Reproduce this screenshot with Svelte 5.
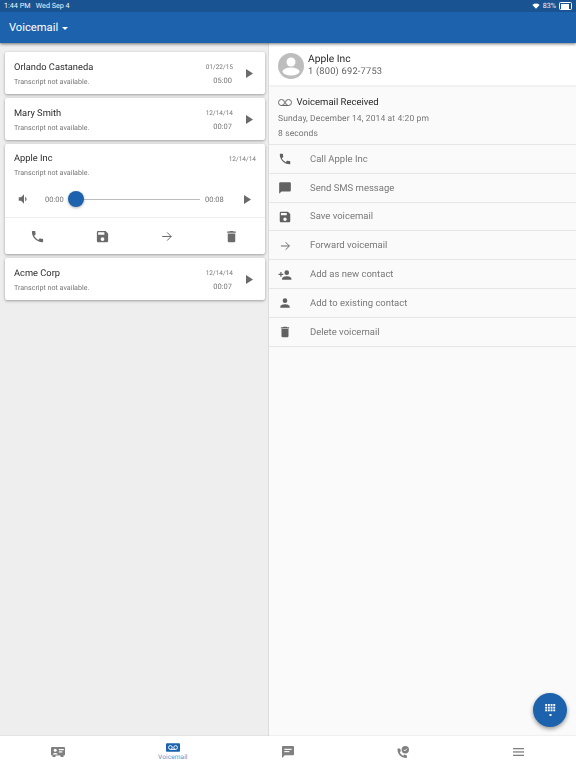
<script>
  const P = {
    phone: "M6.6 10.8c1.4 2.8 3.8 5.1 6.6 6.6l2.2-2.2c.3-.3.7-.4 1-.2 1.1.4 2.3.6 3.6.6.6 0 1 .4 1 1V20c0 .6-.4 1-1 1C10.6 21 3 13.4 3 4c0-.6.4-1 1-1h3.5c.6 0 1 .4 1 1 0 1.3.2 2.5.6 3.6.1.3 0 .7-.2 1z",
    save: "M17 3H5a2 2 0 0 0-2 2v14a2 2 0 0 0 2 2h14a2 2 0 0 0 2-2V7zm-5 16a3 3 0 1 1 0-6 3 3 0 0 1 0 6zm3-10H5V5h10z",
    del: "M6 19a2 2 0 0 0 2 2h8a2 2 0 0 0 2-2V7H6zM19 4h-3.500l-1-1h-5l-1 1H5v2h14z",
    sms: "M20 2H4a2 2 0 0 0-2 2v18l4-4h14a2 2 0 0 0 2-2V4a2 2 0 0 0-2-2z",
    addp: "M15 12a4 4 0 1 0 0-8 4 4 0 0 0 0 8zm-9-2V7H4v3H1v2h3v3h2v-3h3v-2zm9 4c-2.700 0-8 1.300-8 4v2h16v-2c0-2.700-5.300-4-8-4z",
    person: "M12 12a4 4 0 1 0 0-8 4 4 0 0 0 0 8zm0 2c-2.700 0-8 1.300-8 4v2h16v-2c0-2.700-5.300-4-8-4z",
    vol: "M3 9v6h4l5 5V4L7 9zm13.500 3A4.500 4.500 0 0 0 14 8v8a4.500 4.500 0 0 0 2.500-4z"
  };
  const actions = [
    ["phone", "Call Apple Inc"],
    ["sms", "Send SMS message"],
    ["save", "Save voicemail"],
    ["fwd", "Forward voicemail"],
    ["addp", "Add as new contact"],
    ["person", "Add to existing contact"],
    ["del", "Delete voicemail"]
  ];
  const keys = [];
  for (let r = 0; r < 3; r++) for (let c = 0; c < 4; c++) keys.push([c, r]);
</script>

{#snippet icon(name, size)}
  <svg class="ic" width={size} height={size} viewBox="0 0 24 24" aria-hidden="true">
    {#if name === "fwd"}
      <path d="M5 12h14.500M13 5.500l6.500 6.500-6.500 6.500" fill="none" stroke="currentColor" stroke-width="1.600"/>
    {:else}
      <path d={P[name]} fill="currentColor"/>
    {/if}
  </svg>
{/snippet}

{#snippet play()}
  <svg class="play" width="7" height="9" viewBox="0 0 7 9" aria-hidden="true"><path d="M0 0 7 4.500 0 9z" fill="currentColor"/></svg>
{/snippet}

{#snippet card(name, date, time)}
  <article class="card row">
    <div class="grow">
      <div class="name">{name}</div>
      <div class="sub">Transcript not available.</div>
    </div>
    <div class="meta">
      <div class="date">{date}</div>
      <div class="time">{time}</div>
    </div>
    {@render play()}
  </article>
{/snippet}

<div class="page">
  <header class="bar">
    <div class="status">
      <span>1:44 PM&nbsp;&nbsp; Wed Sep 4</span>
      <span class="status-r">
        <svg width="8" height="6" viewBox="0 0 13 10" aria-hidden="true"><path d="M6.500 9.500 0.500 3.200a8.600 8.600 0 0 1 12 0z" fill="#fff"/></svg>
        <span>83%</span>
        <span class="batt"><span class="level"></span></span>
      </span>
    </div>
    <div class="title">Voicemail <span class="caret"></span></div>
  </header>

  <main class="main">
    <section class="list">
      {@render card("Orlando Castaneda", "01/22/15", "05:00")}
      {@render card("Mary Smith", "12/14/14", "00:07")}
      <article class="card open">
        <div class="open-top">
          <div class="head">
            <div class="name">Apple Inc</div>
            <div class="date">12/14/14</div>
          </div>
          <div class="sub sub2">Transcript not available.</div>
          <div class="player">
            <span class="vol">{@render icon("vol", 14)}</span>
            <span class="t1">00:00</span>
            <div class="track"><span class="knob"></span></div>
            <span class="t2">00:08</span>
            {@render play()}
          </div>
        </div>
        <div class="tools">
          <span>{@render icon("phone", 15)}</span>
          <span>{@render icon("save", 15)}</span>
          <span>{@render icon("fwd", 15)}</span>
          <span>{@render icon("del", 15)}</span>
        </div>
      </article>
      {@render card("Acme Corp", "12/14/14", "00:07")}
    </section>

    <section class="detail">
      <div class="contact">
        <svg width="26" height="26" viewBox="0 0 26 26" aria-hidden="true">
          <circle cx="13" cy="13" r="13" fill="#bdbdbd"/>
          <circle cx="13" cy="9" r="4.500" fill="#fff"/>
          <ellipse cx="13" cy="18.500" rx="8.500" ry="4" fill="#fff"/>
        </svg>
        <div>
          <div class="c-name">Apple Inc</div>
          <div class="c-num">1 (800) 692-7753</div>
        </div>
      </div>
      <div class="info">
        <div class="info-h">
          <svg width="14" height="8" viewBox="0 0 14 8" aria-hidden="true"><g fill="none" stroke="#666" stroke-width="1"><circle cx="3.500" cy="3.500" r="3"/><circle cx="10.500" cy="3.500" r="3"/><path d="M3.500 6.500h7"/></g></svg>
          <span>Voicemail Received</span>
        </div>
        <div class="info-l">Sunday, December 14, 2014 at 4:20 pm</div>
        <div class="info-l last">8 seconds</div>
      </div>
      {#each actions as [ic, label]}
        <div class="action">
          <span class="a-ic">{@render icon(ic, 14)}</span>
          <span class="a-label">{label}</span>
        </div>
      {/each}
      <button class="fab" aria-label="Dial pad">
        <svg width="11" height="12" viewBox="0 0 11 12" aria-hidden="true">
          {#each keys as [c, r]}
            <rect x={c * 2.7 + 0.2} y={r * 2.7} width="1.900" height="1.900" fill="#fff"/>
          {/each}
          <rect x="4.500" y="10" width="2" height="2" fill="#fff"/>
        </svg>
      </button>
    </section>
  </main>

  <nav class="tabs">
    <div class="tab">
      <svg width="14" height="10" viewBox="0 0 14 10" aria-hidden="true"><rect width="14" height="8.500" rx="1" fill="#808080"/><rect x="1.500" y="8" width="3" height="2" fill="#808080"/><rect x="9.500" y="8" width="3" height="2" fill="#808080"/><circle cx="4.200" cy="3.200" r="1.500" fill="#fff"/><path d="M1.800 7.500c0-2 4.800-2 4.800 0z" fill="#fff"/><rect x="7.800" y="2" width="5" height="1.200" fill="#fff"/><rect x="7.800" y="4.300" width="3.500" height="1.200" fill="#fff"/></svg>
    </div>
    <div class="tab active">
      <svg width="14" height="9" viewBox="0 0 15 9" aria-hidden="true"><rect width="15" height="9" rx="1" fill="#1c62ad"/><g fill="none" stroke="#fff" stroke-width="1"><circle cx="4.700" cy="4.500" r="2"/><circle cx="10.300" cy="4.500" r="2"/><path d="M4.700 6.500h5.600"/></g></svg>
      <span>Voicemail</span>
    </div>
    <div class="tab">
      <svg width="12" height="12" viewBox="0 0 13 13" aria-hidden="true"><path d="M1 0h11a1 1 0 0 1 1 1v8a1 1 0 0 1-1 1H3l-3 3V1a1 1 0 0 1 1-1z" fill="#808080"/><rect x="2.500" y="3" width="8" height="1.200" fill="#fff"/><rect x="2.500" y="5.500" width="5.500" height="1.200" fill="#fff"/></svg>
    </div>
    <div class="tab">
      <svg width="12" height="13" viewBox="0 0 13 14" aria-hidden="true"><path d="M0.500 3.500c0 5.500 4 9.500 9.500 9.500.4 0 .7-.3.700-.7V10.200l-2.700-1-1.300 1.300C4.900 9.500 3.700 8.300 3 6.600L4.300 5.300l-1-2.700H1.200c-.4 0-.7.400-.7.900z" fill="#808080"/><circle cx="9" cy="4" r="4" fill="#808080"/><path d="M7.200 4l1.300 1.300 2.200-2.400" stroke="#fff" fill="none"/></svg>
    </div>
    <div class="tab">
      <svg width="11" height="8" viewBox="0 0 11 8" aria-hidden="true"><rect width="11" height="1.300" fill="#808080"/><rect y="3.300" width="11" height="1.300" fill="#808080"/><rect y="6.700" width="11" height="1.300" fill="#808080"/></svg>
    </div>
  </nav>
</div>

<style>
  :global(body) { margin: 0; font-family: Roboto, "Liberation Sans", sans-serif; text-rendering: geometricPrecision; }
  .page { width: 576px; height: 768px; display: flex; flex-direction: column; overflow: hidden; background: #eee; color: #212121; }
  .ic { display: block; }

  .bar { background: #1c62ad; height: 43px; color: #fff; box-shadow: 0 1px 3px rgba(0,0,0,.55); position: relative; z-index: 2; flex: none; }
  .status { height: 12px; background: #1a5391; font-size: 7.200px; line-height: 12px; padding: 0 4px; display: flex; justify-content: space-between; align-items: center; color: #eef3f9; }
  .status-r { display: flex; align-items: center; gap: 3px; }
  .batt { width: 10px; height: 5px; border: 0.500px solid #fff; border-radius: 1.500px; padding: .5px; display: block; box-sizing: content-box; }
  .level { display: block; width: 83%; height: 100%; background: #fff; }
  .title { height: 31px; box-sizing: border-box; padding: 0 0 0 9px; line-height: 30px; font-size: 11.200px; display: flex; align-items: center; gap: 3px; }
  .caret { width: 0; height: 0; border: 3px solid transparent; border-top: 3px solid #fff; border-bottom: 0; margin-top: 1px; margin-left: 1px; }

  .main { flex: 1; display: flex; min-height: 0; }
  .list { width: 269px; box-sizing: border-box; flex: none; padding: 9px 3px 0 5px; display: flex; flex-direction: column; gap: 4px; border-right: 1px solid #ddd; }
  .card { background: #fff; border-radius: 2px; box-shadow: 0 1px 3px rgba(0,0,0,.35); }
  .row { height: 42px; display: flex; align-items: center; padding: 0 12px 0 9px; flex: none; }
  .grow { flex: 1; padding-top: 1px; }
  .name { font-size: 9.300px; line-height: 14px; color: #2b2b2b; filter: grayscale(1); }
  .sub { font-size: 7.100px; line-height: 10px; color: #757575; margin-top: 2px; filter: grayscale(1); }
  .meta { font-size: 7.500px; line-height: 10px; color: #757575; text-align: right; width: 40px; display: flex; flex-direction: column; gap: 4px; margin-right: 13px; padding-top: 1px; }
  .time { padding-right: 1px; filter: grayscale(1); }
  .play { color: #6b6b6b; display: block; flex: none; }

  .open { flex: none; height: 110px; display: flex; flex-direction: column; }
  .open-top { flex: 1; padding: 8px 15px 0 9px; border-bottom: 1px solid #eee; }
  .head { display: flex; justify-content: space-between; align-items: center; margin-right: -6px; }
  .date { font-size: 6.500px; color: #757575; filter: grayscale(1); }
  .sub2 { margin-top: 2px; }
  .player { display: flex; align-items: center; height: 22px; margin-top: 10px; font-size: 7.500px; color: #757575; }
  .vol { width: 28px; color: #6b6b6b; margin-left: 3px; flex: none; }
  .t1 { width: 23px; flex: none; filter: grayscale(1); }
  .track { width: 132px; height: 1px; background: #bdbdbd; position: relative; flex: none; }
  .knob { position: absolute; left: 0; top: -8px; width: 16px; height: 16px; border-radius: 50%; background: #1c62ad; box-shadow: 0 1px 3px rgba(0,0,0,.3); }
  .t2 { margin-left: 5px; width: 39px; flex: none; filter: grayscale(1); }
  .tools { height: 36px; flex: none; padding-right: 1px; display: grid; grid-template-columns: repeat(4, 1fr); align-items: center; justify-items: center; color: #6b6b6b; }

  .detail { flex: 1; background: #fafafa; position: relative; }
  .contact { height: 44px; background: #fff; display: flex; align-items: center; gap: 4px; padding: 3px 0 0 9px; box-sizing: border-box; border-bottom: 2px solid #f1f1f1; }
  .c-name { font-size: 10.300px; line-height: 13px; color: #2b2b2b; filter: grayscale(1); }
  .c-num { font-size: 9.300px; line-height: 14px; color: #616161; letter-spacing: .2px; filter: grayscale(1); }
  .info { height: 58px; box-sizing: border-box; padding: 9px 8px 0 9px; border-bottom: 1px solid #e6e6e6; }
  .info-h { display: flex; align-items: center; gap: 4.500px; font-size: 9.500px; line-height: 14px; color: #2b2b2b; filter: grayscale(1); }
  .info-l { font-size: 8.500px; line-height: 14px; color: #757575; margin-top: 2px; letter-spacing: .12px; filter: grayscale(1); }
  .info-l.last { margin-top: 1px; }
  .action { height: 28.800px; box-sizing: border-box; border-bottom: 1px solid #e6e6e6; display: flex; align-items: center; font-size: 9.500px; color: #7a7a7a; padding: 1px 0 0 9px; }
  .a-ic { width: 32px; color: #616161; }
  .a-label { filter: grayscale(1); }
  .fab { position: absolute; right: 9px; bottom: 9px; width: 34px; height: 34px; border: 0; border-radius: 50%; padding: 0; background: #1c62ad; box-shadow: 0 2px 4px rgba(0,0,0,.4); display: flex; align-items: center; justify-content: center; }

  .tabs { height: 32px; flex: none; background: #fff; display: flex; position: relative; z-index: 2; box-shadow: 0 -1px 1px rgba(0,0,0,.04); }
  .tab { flex: 1; display: flex; flex-direction: column; align-items: center; justify-content: center; gap: 2px; }
  .tab span { font-size: 6.500px; line-height: 7px; color: #5a90cb; letter-spacing: .1px; }
</style>
